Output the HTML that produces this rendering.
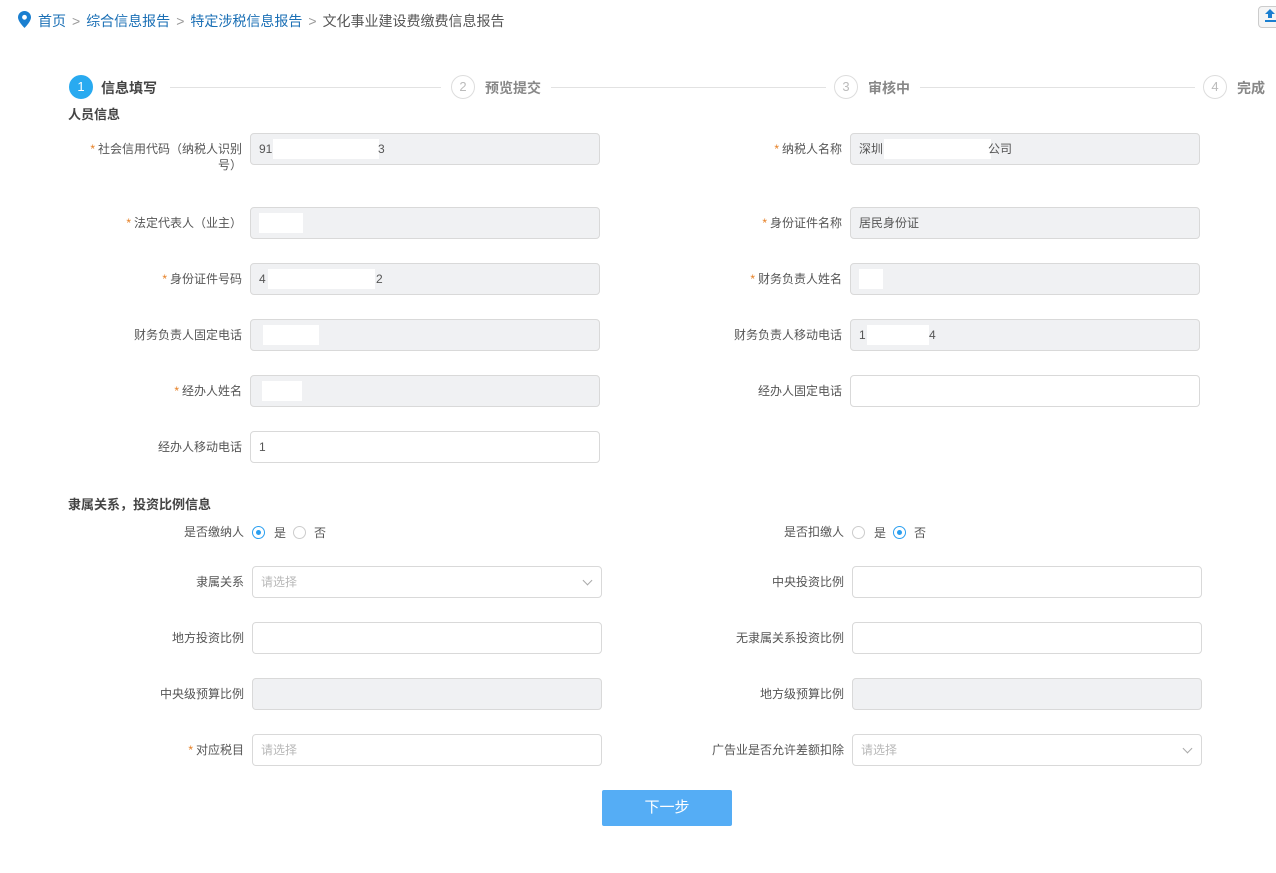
<!DOCTYPE html>
<html><head><meta charset="utf-8"><style>
*{margin:0;padding:0;box-sizing:border-box}
body{width:1276px;height:873px;background:#fff;position:relative;overflow:hidden;font-family:"Liberation Sans","Noto Sans CJK SC",sans-serif;color:#555;font-size:12px}
.a{position:absolute}
.bc{top:11px;left:38px;font-size:14px;color:#999;white-space:nowrap}
.bc a{color:#1a6fb5;text-decoration:none}
.bc span{margin:0 6px}
.c{position:absolute;width:24px;height:24px;border-radius:50%;border:1px solid #ddd;color:#bbb;font-size:13px;text-align:center;line-height:22px;top:75px;background:#fff}
.st{position:absolute;top:78px;font-size:14px;font-weight:bold;color:#888}
.ln{position:absolute;top:87px;height:1px;background:#e2e2e2}
.h{font-size:13px;font-weight:bold;color:#444}
.l{position:absolute;text-align:right;font-size:12px;color:#555;width:200px;line-height:16px}
.l b{color:#e67e22;font-weight:normal;margin-right:3px}
.i{position:absolute;width:350px;height:32px;border:1px solid #d9d9d9;border-radius:4px;background:#fff;font-size:12px;color:#555;line-height:30px;padding-left:8px}
.g{background:#f0f1f3}
.w{position:absolute;top:5px;height:20px;background:#fff}
.ph{color:#b8b8b8}
.ar{position:absolute;right:10px;top:10px;width:7px;height:7px;border-right:1px solid #aaa;border-bottom:1px solid #aaa;transform:rotate(45deg)}
.r{position:absolute;width:13px;height:13px;border:1px solid #ccc;border-radius:50%;top:526px}
.r.on{border-color:#2a9ff0}
.r.on:after{content:"";position:absolute;left:3px;top:3px;width:5px;height:5px;border-radius:50%;background:#2a9ff0}
.rt{position:absolute;top:524px;font-size:12px;color:#555}
</style></head><body>
<svg class="a" style="left:18px;top:11px" width="13" height="17" viewBox="0 0 13 17"><path d="M6.5 0C2.9 0 0 2.8 0 6.3 0 10.8 6.5 17 6.5 17S13 10.8 13 6.3C13 2.8 10.1 0 6.5 0z" fill="#1a7fd0"/><circle cx="6.5" cy="6.3" r="2.4" fill="#fff"/></svg>
<div class="a bc"><a>首页</a><span>&gt;</span><a>综合信息报告</a><span>&gt;</span><a>特定涉税信息报告</a><span>&gt;</span><span style="margin:0;color:#555">文化事业建设费缴费信息报告</span></div>
<div class="a" style="left:1258px;top:6px;width:24px;height:22px;border:1px solid #ccc;border-radius:4px;background:#f5f5f5"></div>
<svg class="a" style="left:1264px;top:8px" width="12" height="16" viewBox="0 0 12 16"><path d="M6 1L1 6h3v4h4V6h3z" fill="#1a7fd0"/><rect x="1" y="12" width="11" height="2" fill="#1a7fd0"/></svg>

<div class="c" style="left:69px;background:#29aaf0;border-color:#29aaf0;color:#fff">1</div>
<div class="st" style="left:101px;color:#444">信息填写</div>
<div class="ln" style="left:170px;width:271px"></div>
<div class="c" style="left:451px">2</div>
<div class="st" style="left:485px">预览提交</div>
<div class="ln" style="left:551px;width:275px"></div>
<div class="c" style="left:834px">3</div>
<div class="st" style="left:868px">审核中</div>
<div class="ln" style="left:920px;width:275px"></div>
<div class="c" style="left:1203px">4</div>
<div class="st" style="left:1237px">完成</div>

<div class="a h" style="left:68px;top:104px">人员信息</div>

<div class="l" style="left:42px;top:141px"><b>*</b>社会信用代码（纳税人识别<br>号）</div>
<div class="i g" style="left:250px;top:133px">91<span class="w" style="left:22px;width:106px"></span><span style="position:absolute;left:127px">3</span></div>
<div class="l" style="left:642px;top:141px"><b>*</b>纳税人名称</div>
<div class="i g" style="left:850px;top:133px">深圳<span class="w" style="left:33px;width:107px"></span><span style="position:absolute;left:137px">公司</span></div>

<div class="l" style="left:42px;top:215px"><b>*</b>法定代表人（业主）</div>
<div class="i g" style="left:250px;top:207px"><span class="w" style="left:8px;width:44px"></span></div>
<div class="l" style="left:642px;top:215px"><b>*</b>身份证件名称</div>
<div class="i g" style="left:850px;top:207px">居民身份证</div>

<div class="l" style="left:42px;top:271px"><b>*</b>身份证件号码</div>
<div class="i g" style="left:250px;top:263px">4<span class="w" style="left:17px;width:107px"></span><span style="position:absolute;left:125px">2</span></div>
<div class="l" style="left:642px;top:271px"><b>*</b>财务负责人姓名</div>
<div class="i g" style="left:850px;top:263px"><span class="w" style="left:8px;width:24px"></span></div>

<div class="l" style="left:42px;top:327px">财务负责人固定电话</div>
<div class="i g" style="left:250px;top:319px"><span class="w" style="left:12px;width:56px"></span></div>
<div class="l" style="left:642px;top:327px">财务负责人移动电话</div>
<div class="i g" style="left:850px;top:319px">1<span class="w" style="left:16px;width:62px"></span><span style="position:absolute;left:78px">4</span></div>

<div class="l" style="left:42px;top:383px"><b>*</b>经办人姓名</div>
<div class="i g" style="left:250px;top:375px"><span class="w" style="left:11px;width:40px"></span></div>
<div class="l" style="left:642px;top:383px">经办人固定电话</div>
<div class="i" style="left:850px;top:375px"></div>

<div class="l" style="left:42px;top:439px">经办人移动电话</div>
<div class="i" style="left:250px;top:431px">1<span class="w" style="left:16px;width:40px"></span></div>

<div class="a h" style="left:68px;top:494px">隶属关系，投资比例信息</div>

<div class="l" style="left:44px;top:524px">是否缴纳人</div>
<div class="r on" style="left:252px"></div><div class="rt" style="left:274px">是</div>
<div class="r" style="left:293px"></div><div class="rt" style="left:314px">否</div>
<div class="l" style="left:644px;top:524px">是否扣缴人</div>
<div class="r" style="left:852px"></div><div class="rt" style="left:874px">是</div>
<div class="r on" style="left:893px"></div><div class="rt" style="left:914px">否</div>

<div class="l" style="left:44px;top:574px">隶属关系</div>
<div class="i" style="left:252px;top:566px"><span class="ph">请选择</span><span class="ar"></span></div>
<div class="l" style="left:644px;top:574px">中央投资比例</div>
<div class="i" style="left:852px;top:566px"></div>

<div class="l" style="left:44px;top:630px">地方投资比例</div>
<div class="i" style="left:252px;top:622px"></div>
<div class="l" style="left:644px;top:630px">无隶属关系投资比例</div>
<div class="i" style="left:852px;top:622px"></div>

<div class="l" style="left:44px;top:686px">中央级预算比例</div>
<div class="i g" style="left:252px;top:678px"></div>
<div class="l" style="left:644px;top:686px">地方级预算比例</div>
<div class="i g" style="left:852px;top:678px"></div>

<div class="l" style="left:44px;top:742px"><b>*</b>对应税目</div>
<div class="i" style="left:252px;top:734px"><span class="ph">请选择</span></div>
<div class="l" style="left:644px;top:742px">广告业是否允许差额扣除</div>
<div class="i" style="left:852px;top:734px"><span class="ph">请选择</span><span class="ar"></span></div>

<div class="a" style="left:602px;top:790px;width:130px;height:36px;background:#55adf5;border-radius:2px;color:#fff;font-size:15px;text-align:center;line-height:36px">下一步</div>
</body></html>
